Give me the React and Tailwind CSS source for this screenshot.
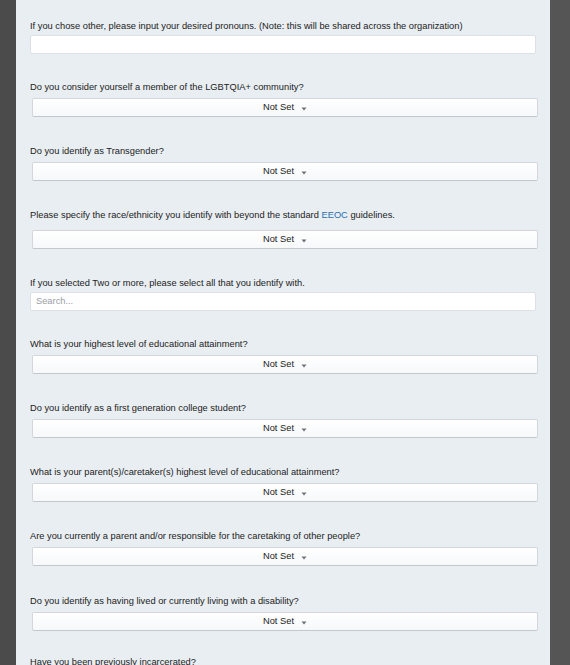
import React from "react";

const Caret = () => (
  <svg width="6" height="4" viewBox="0 0 6 4" className="ml-[7px] mt-[2px]">
    <path d="M0.5 0.5 L5.5 0.5 L3 3.5 Z" fill="#6b7078" />
  </svg>
);

const Select = ({ mt = "mt-[5px]" }) => (
  <div
    className={`${mt} ml-[2px] h-[19px] w-[506px] rounded-[2px] border border-[#d3d7db] border-b-[#c4c8cc] bg-gradient-to-b from-[#ffffff] to-[#f6f8fa] flex items-center justify-center text-[9.3px] text-[#222]`}
  >
    <span>Not Set</span>
    <Caret />
  </div>
);

const Input = ({ placeholder }) => (
  <div className="mt-[3px] h-[19px] w-[506px] rounded-[2px] border border-[#dde1e5] bg-white flex items-center px-[5px] text-[9.3px] text-[#9a9ea3]">
    {placeholder}
  </div>
);

const Label = ({ children }) => (
  <div className="text-[9.3px] leading-[11px] text-[#222]">{children}</div>
);

export default function App() {
  return (
    <div
      className="flex w-[570px] h-[665px] overflow-hidden"
      style={{ fontFamily: "'Liberation Sans', Arial, Helvetica, sans-serif" }}
    >
      <div className="w-[16px] bg-[#4b4b4b] shrink-0" />
      <div className="w-[534px] bg-[#e9eef2] shrink-0 pl-[14px] pt-[21px]">
        <Label>
          If you chose other, please input your desired pronouns. (Note: this
          will be shared across the organization)
        </Label>
        <Input />

        <div className="mt-[28px]">
          <Label>Do you consider yourself a member of the LGBTQIA+ community?</Label>
          <Select />
        </div>

        <div className="mt-[29px]">
          <Label>Do you identify as Transgender?</Label>
          <Select />
        </div>

        <div className="mt-[29px]">
          <Label>
            Please specify the race/ethnicity you identify with beyond the
            standard <span className="text-[#2a6db0]">EEOC</span> guidelines.
          </Label>
          <Select mt="mt-[9px]" />
        </div>

        <div className="mt-[29px]">
          <Label>If you selected Two or more, please select all that you identify with.</Label>
          <Input placeholder="Search..." />
        </div>

        <div className="mt-[28px]">
          <Label>What is your highest level of educational attainment?</Label>
          <Select />
        </div>

        <div className="mt-[29px]">
          <Label>Do you identify as a first generation college student?</Label>
          <Select />
        </div>

        <div className="mt-[29px]">
          <Label>What is your parent(s)/caretaker(s) highest level of educational attainment?</Label>
          <Select />
        </div>

        <div className="mt-[29px]">
          <Label>Are you currently a parent and/or responsible for the caretaking of other people?</Label>
          <Select />
        </div>

        <div className="mt-[30px]">
          <Label>Do you identify as having lived or currently living with a disability?</Label>
          <Select />
        </div>

        <div className="mt-[26px]">
          <Label>Have you been previously incarcerated?</Label>
        </div>
      </div>
      <div className="flex-1 bg-[#555555]" />
    </div>
  );
}
